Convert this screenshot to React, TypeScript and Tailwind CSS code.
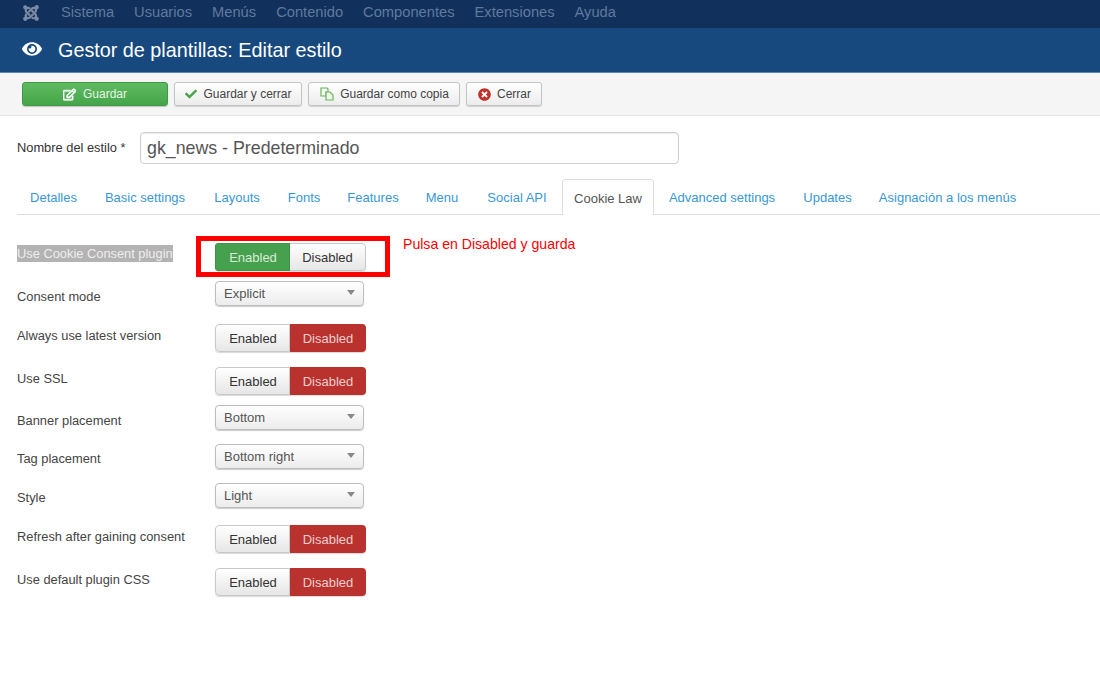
import { FaCheck, FaEye, FaJoomla, FaRegEdit, FaTimesCircle } from 'react-icons/fa';

const menu = ['Sistema', 'Usuarios', 'Menús', 'Contenido', 'Componentes', 'Extensiones', 'Ayuda'];
const tabs = [
  { label: 'Detalles', width: 'w-[73px]' },
  { label: 'Basic settings', width: 'w-[110px]' },
  { label: 'Layouts', width: 'w-[74px]' },
  { label: 'Fonts', width: 'w-[60px]' },
  { label: 'Features', width: 'w-[78px]' },
  { label: 'Menu', width: 'w-[60px]' },
  { label: 'Social API', width: 'w-[90px]' },
  { label: 'Cookie Law', width: 'w-[92px]' },
  { label: 'Advanced settings', width: 'w-[136px]' },
  { label: 'Updates', width: 'w-[75px]' },
  { label: 'Asignación a los menús', width: 'w-[165px]' },
];

const CopyIcon = () => (
  <svg width="14" height="14" viewBox="0 0 14 14" fill="none">
    <path d="M1 1h6l1 1v3H6v4H1z" fill="#f7fbf5" stroke="#6cb35f" strokeWidth="1.2" />
    <path d="M6 5h4l3 3v5H6z" fill="#eef6ea" stroke="#6cb35f" strokeWidth="1.2" />
  </svg>
);

const ToolButton = ({ icon, label, width }: { icon: React.ReactNode; label: string; width: string }) => (
  <div className={`${width} h-[24px] flex items-center justify-center gap-[6px] pl-[1px] rounded-[3px] border border-[#c4c4c4] bg-gradient-to-b from-white to-[#ececec] shadow-[0_1px_1px_rgba(0,0,0,0.15)] text-[12px] text-[#444]`}>
    {icon}
    <span>{label}</span>
  </div>
);

const Toggle = ({ on }: { on: boolean }) => (
  <div className="flex h-[28px] w-[151px] text-[13px] rounded-[4px] shadow-[0_1px_1px_rgba(0,0,0,0.15)] overflow-hidden">
    <div className={on
      ? 'w-[75px] flex items-center justify-center pt-[1px] pl-[1px] bg-[#46a04e] text-[#d8ecd8] border border-[#3f9146]'
      : 'w-[75px] flex items-center justify-center pt-[1px] pl-[1px] rounded-l-[4px] border border-[#c8c8c8] bg-gradient-to-b from-white to-[#e6e6e6] text-[#333]'}>
      Enabled
    </div>
    <div className={on
      ? 'flex-1 flex items-center justify-center pt-[1px] rounded-r-[4px] border border-l-0 border-[#c8c8c8] bg-gradient-to-b from-white to-[#e6e6e6] text-[#333]'
      : 'flex-1 flex items-center justify-center pt-[1px] bg-[#b9322d] text-[#eccfcd]'}>
      Disabled
    </div>
  </div>
);

const Select = ({ value }: { value: string }) => (
  <div className="flex h-[25px] w-[149px] items-center justify-between rounded-[4px] border border-[#bdbdbd] bg-gradient-to-b from-white to-[#ececec] px-[8px] pt-[1px] text-[13px] text-[#555] shadow-[0_1px_1px_rgba(0,0,0,0.2)]">
    <span>{value}</span>
    <span className="mb-[3px] h-0 w-0 border-x-[4px] border-t-[5px] border-x-transparent border-t-[#888]" />
  </div>
);

const Row = ({ label, labelTop, gap, children, selected }: { label: string; labelTop: string; gap: string; children: React.ReactNode; selected?: boolean }) => (
  <div className={`flex items-start ${gap}`}>
    <div className={`w-[198px] text-[12.85px] leading-[17px] ${labelTop}`}>
      <span className={selected ? 'inline-block bg-[#b3b3b3] text-[#eeeeee]' : 'text-[#444]'}>{label}</span>
    </div>
    {children}
  </div>
);

export default function App() {
  return (
    <div className="relative h-[684px] w-[1100px] overflow-hidden bg-white font-['Liberation_Sans',Arial,sans-serif]">
      <div className="flex h-[28px] items-center bg-[#12305c] pb-[3px] text-[14.7px] text-[#5f7a9c]">
        <FaJoomla className="ml-[22px] mr-[21px] text-[18px] text-[#7a8aa3]" />
        <div className="flex gap-[20px]">
          {menu.map((m) => <span key={m}>{m}</span>)}
        </div>
      </div>

      <div className="flex h-[45px] items-center bg-[#17497e] border-b border-[#5b87b3] text-white">
        <FaEye className="ml-[22px] text-[20px] mb-[3px]" />
        <h1 className="ml-[16px] pt-[2px] text-[19.8px]">Gestor de plantillas: Editar estilo</h1>
      </div>

      <div className="flex h-[43px] items-center gap-[6px] border-b border-[#e4e4e4] bg-[#f5f5f5] pl-[22px]">
        <div className="flex h-[24px] w-[146px] items-center justify-center gap-[7px] rounded-[3px] border border-[#3f9a44] bg-gradient-to-b from-[#5fbb61] to-[#45a449] text-[12px] text-[#e6f4e6] shadow-[0_1px_1px_rgba(0,0,0,0.2)]">
          <FaRegEdit className="text-[13px] text-white" stroke="currentColor" strokeWidth={30} />
          <span>Guardar</span>
        </div>
        <ToolButton width="w-[128px]" icon={<FaCheck className="text-[12px] text-[#4aa34c]" />} label="Guardar y cerrar" />
        <ToolButton width="w-[152px]" icon={<CopyIcon />} label="Guardar como copia" />
        <ToolButton width="w-[76px]" icon={<FaTimesCircle className="text-[13px] text-[#c0322c]" />} label="Cerrar" />
      </div>

      <div className="flex items-center pl-[17px] pt-[16px]">
        <span className="w-[123px] text-[12.85px] text-[#333]">Nombre del estilo *</span>
        <div className="flex h-[32px] w-[539px] items-center rounded-[4px] border border-[#cfcfcf] pl-[6px] text-[17.8px] text-[#555] shadow-[inset_0_1px_1px_rgba(0,0,0,0.08)]">
          gk_news - Predeterminado
        </div>
      </div>

      <div className="ml-[17px] mt-[15px] flex h-[36px] items-stretch border-b border-[#dddddd] text-[13px]">
        {tabs.map((t) => (
          <div
            key={t.label}
            className={t.label === 'Cookie Law'
              ? `${t.width} mb-[-1px] flex items-center justify-center pt-[2px] rounded-t-[4px] border border-b-0 border-[#dddddd] bg-white text-[#555]`
              : `${t.width} flex items-center justify-center pt-[2px] text-[#3a97d6]`}
          >
            {t.label}
          </div>
        ))}
      </div>

      <div className="ml-[17px] mt-[28px] flex flex-col">
        <Row label="Use Cookie Consent plugin" labelTop="mt-[2px]" gap="mb-[10px]" selected><Toggle on /></Row>
        <Row label="Consent mode" labelTop="mt-[7px]" gap="mb-[18px]"><Select value="Explicit" /></Row>
        <Row label="Always use latest version" labelTop="mt-[3px]" gap="mb-[15px]"><Toggle on={false} /></Row>
        <Row label="Use SSL" labelTop="mt-[3px]" gap="mb-[10px]"><Toggle on={false} /></Row>
        <Row label="Banner placement" labelTop="mt-[7px]" gap="mb-[14px]"><Select value="Bottom" /></Row>
        <Row label="Tag placement" labelTop="mt-[6px]" gap="mb-[14px]"><Select value="Bottom right" /></Row>
        <Row label="Style" labelTop="mt-[6px]" gap="mb-[17px]"><Select value="Light" /></Row>
        <Row label="Refresh after gaining consent" labelTop="mt-[3px]" gap="mb-[15px]"><Toggle on={false} /></Row>
        <Row label="Use default plugin CSS" labelTop="mt-[3px]" gap=""><Toggle on={false} /></Row>
      </div>

      {/* red annotation drawn over the form */}
      <div className="absolute left-[196px] top-[236px] h-[41px] w-[194px] border-[5px] border-[#ff0000]" />
      <div className="absolute left-[403px] top-[234px] text-[14.1px] text-[#ff0000]">Pulsa en Disabled y guarda</div>
    </div>
  );
}
